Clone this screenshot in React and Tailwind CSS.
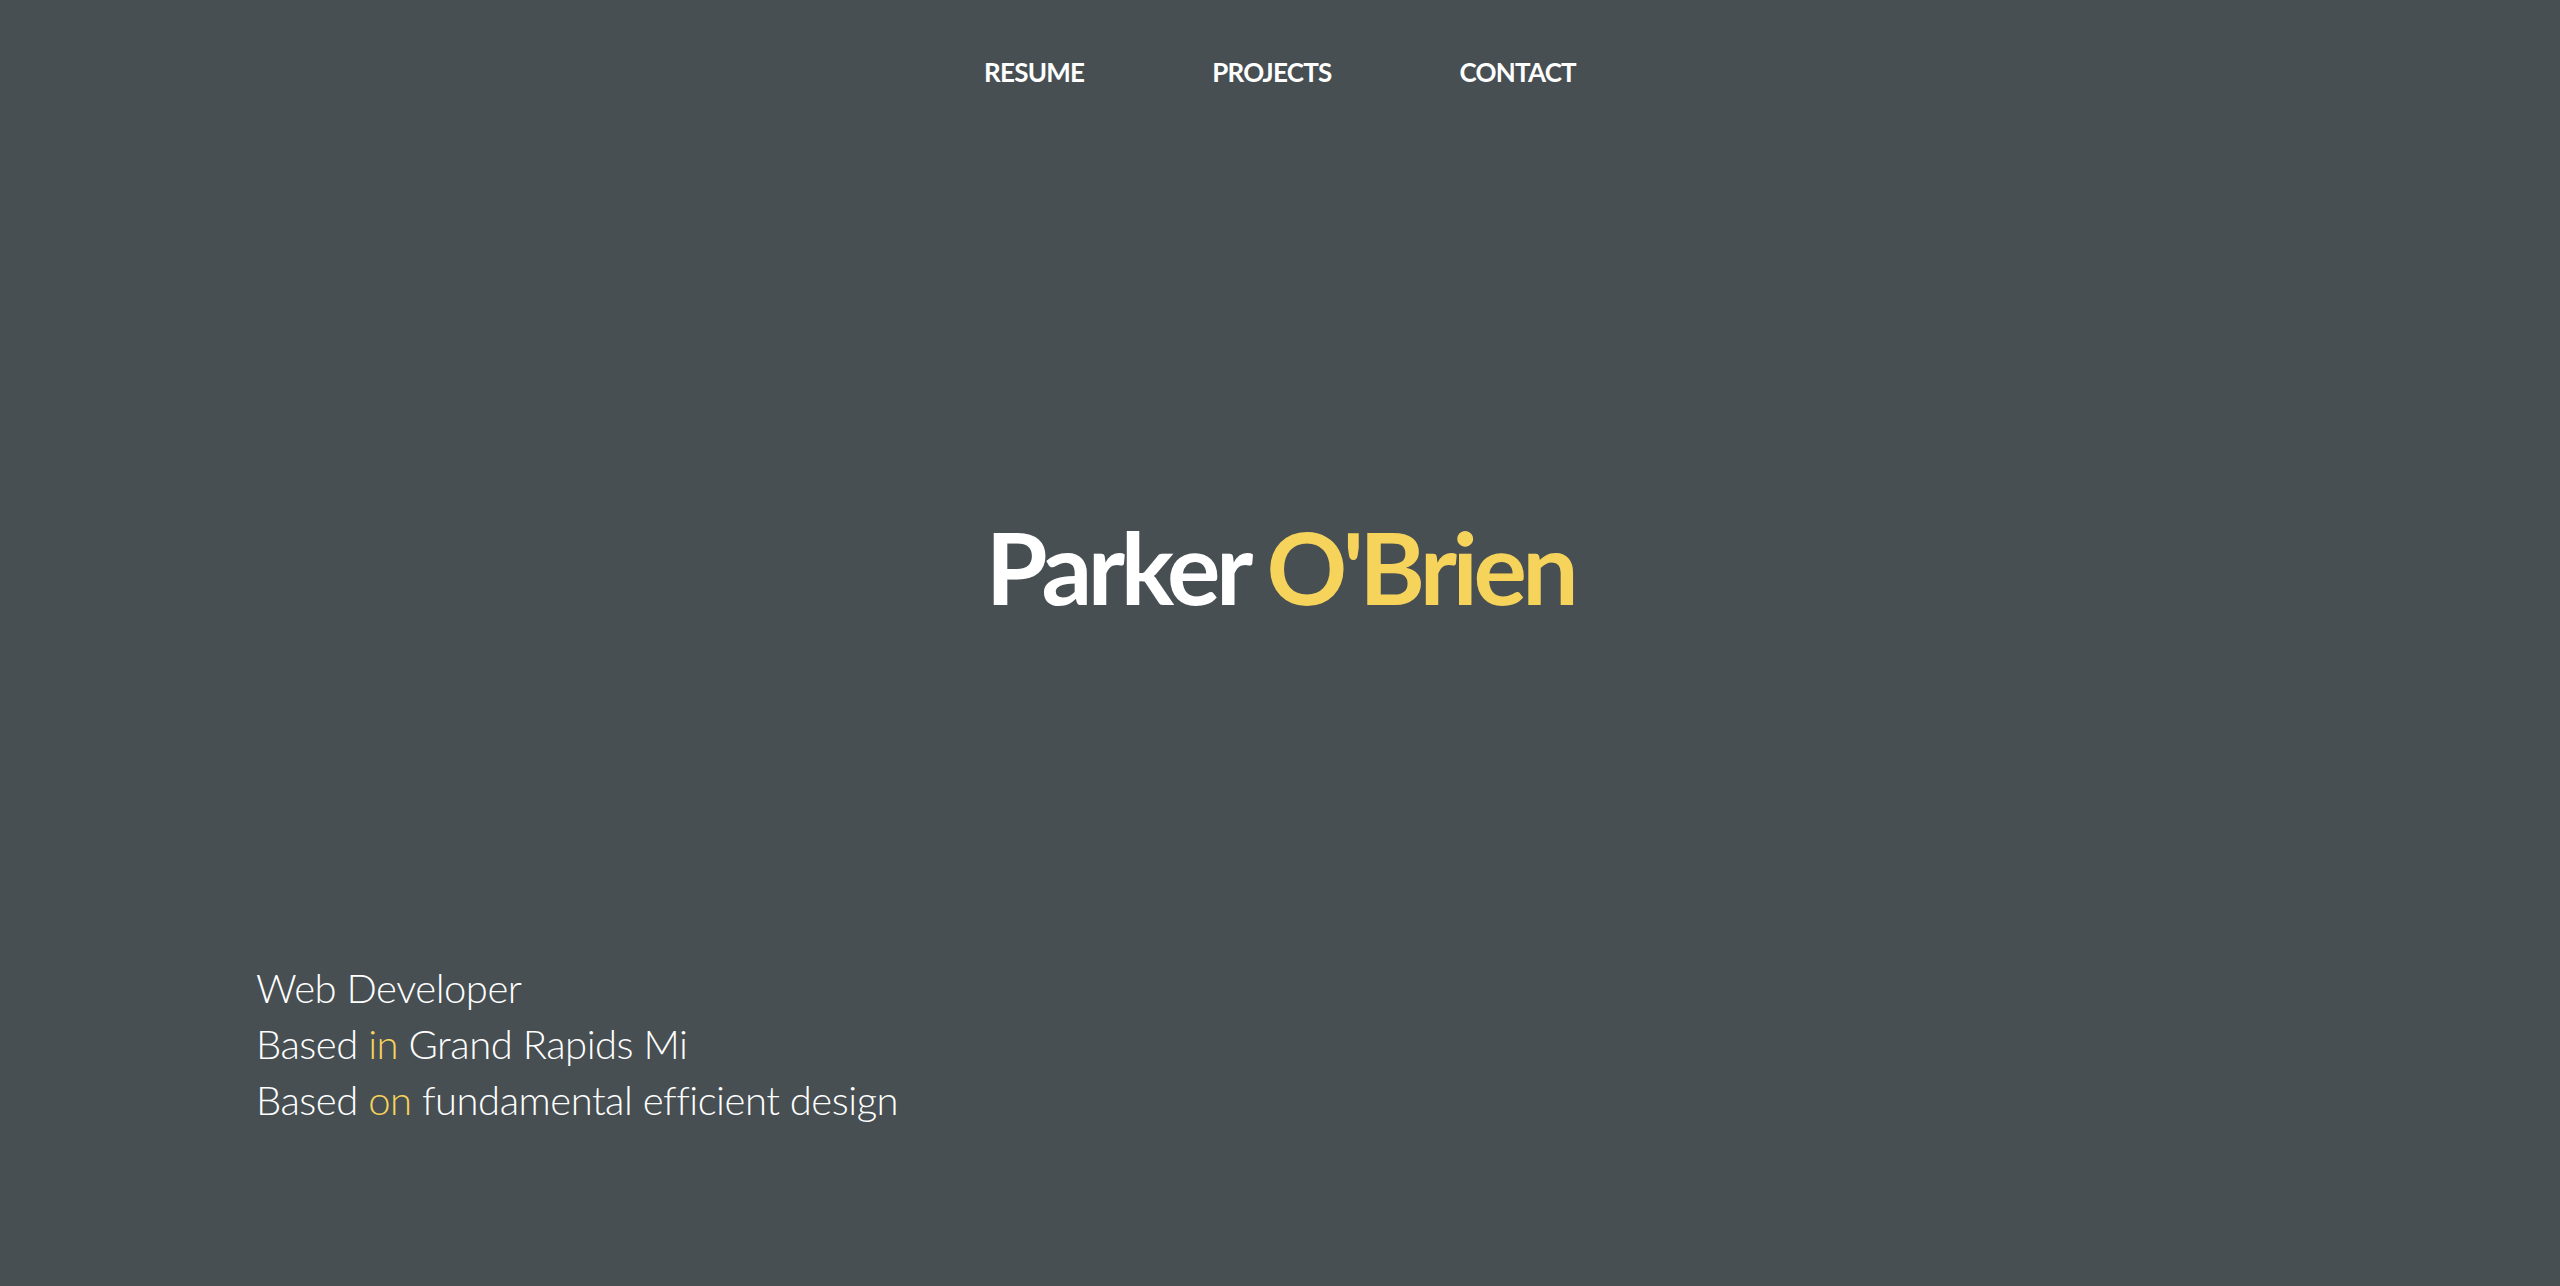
export default function App() {
  const font = { fontFamily: "Lato, 'Noto Sans', sans-serif" };
  return (
    <div className="min-h-screen w-full bg-[#474f53] text-white" style={font}>
      <nav className="flex justify-center gap-[128px] pt-[59px]">
        <a className="text-[26px] leading-none font-bold tracking-[-0.03em] uppercase">Resume</a>
        <a className="text-[26px] leading-none font-bold tracking-[-0.03em] uppercase">Projects</a>
        <a className="text-[26px] leading-none font-bold tracking-[-0.03em] uppercase">Contact</a>
      </nav>
      <h1 className="mt-[431px] text-center text-[100px] leading-none font-bold tracking-[-0.045em]">
        Parker <span className="text-[#f6d35a]">O'Brien</span>
      </h1>
      <div className="mt-[344px] pl-[256px] text-[40px] leading-[56px] font-light tracking-[-0.012em]">
        <p>Web Developer</p>
        <p>
          Based <span className="text-[#f6d35a]">in</span> Grand Rapids Mi
        </p>
        <p>
          Based <span className="text-[#f6d35a]">on</span> fundamental efficient design
        </p>
      </div>
    </div>
  );
}
